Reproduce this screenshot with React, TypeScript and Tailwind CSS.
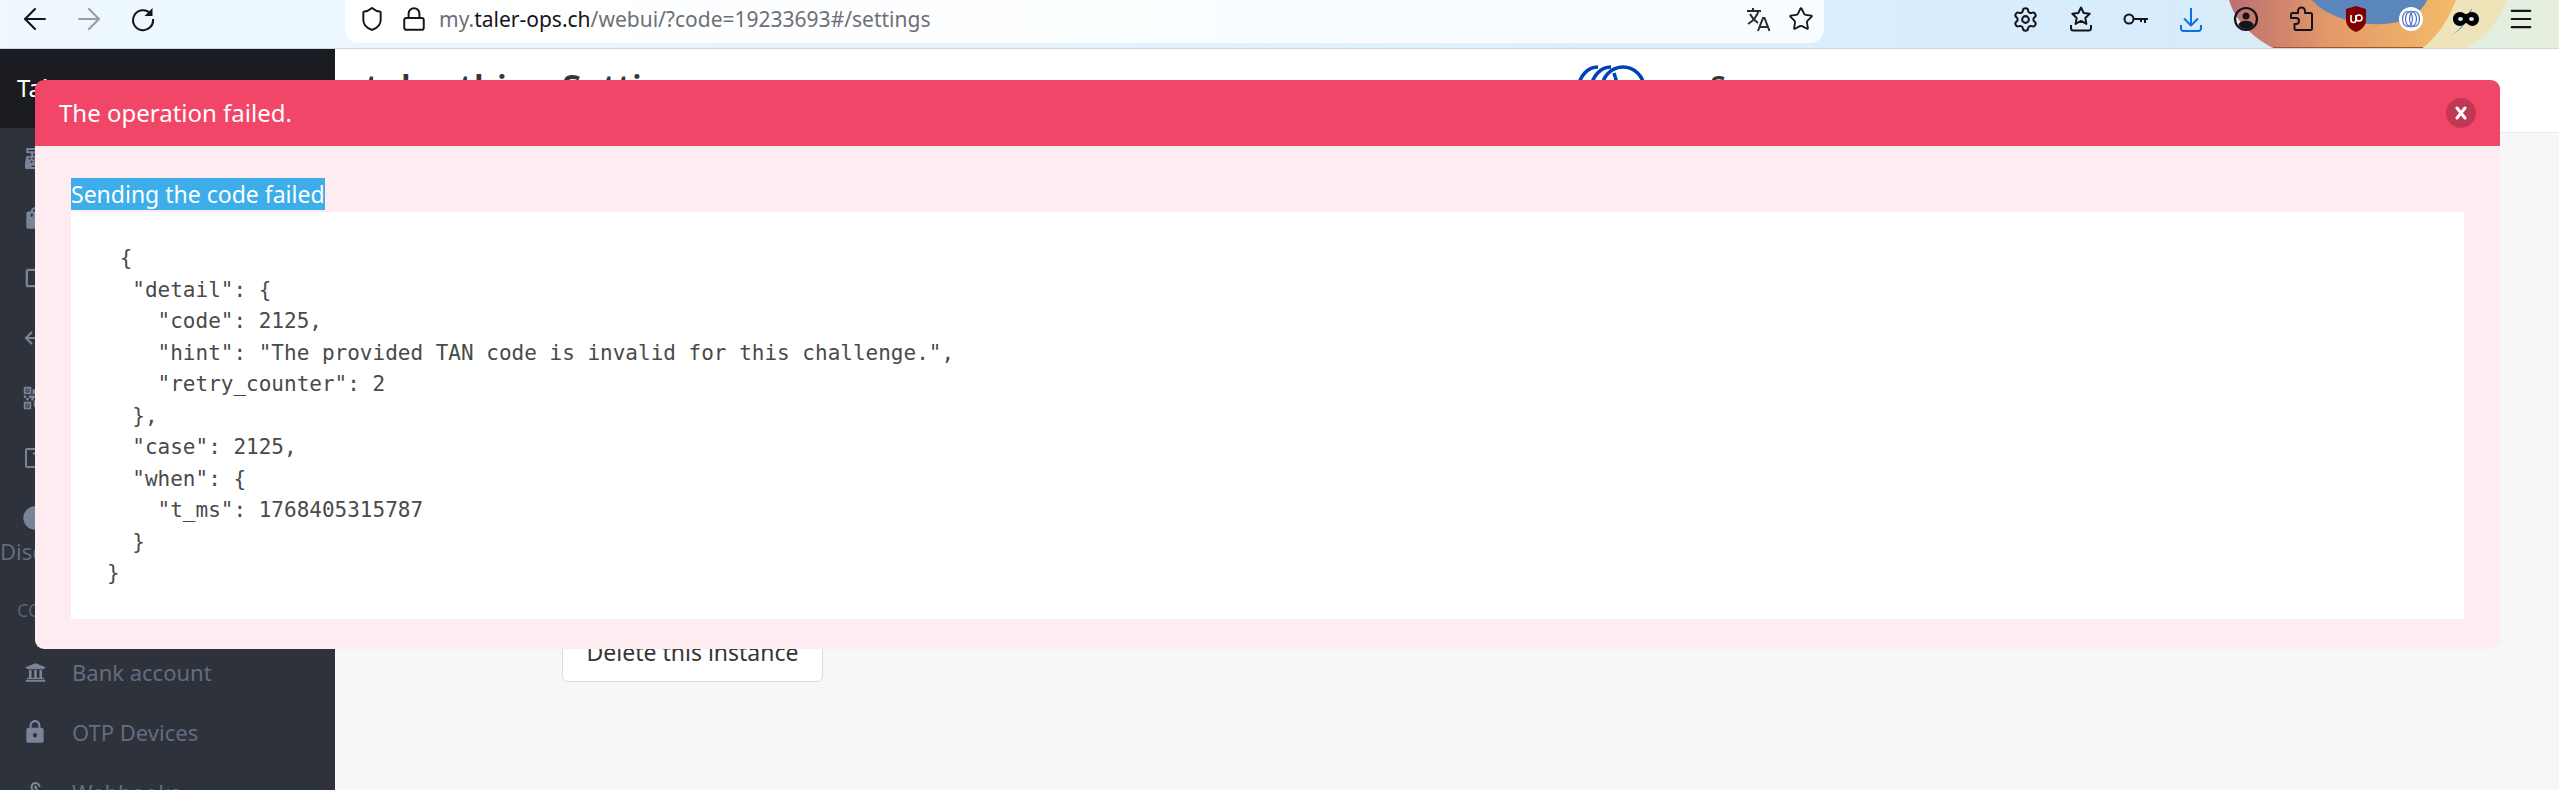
import { ArrowLeft, ArrowRight, Lock, Menu, Settings, Shield, Star } from "lucide-react";
import { FaCashRegister, FaUniversity } from "react-icons/fa";
import { MdCropSquare, MdLock, MdQrCode2, MdWebhook, MdCircle, MdShoppingBag } from "react-icons/md";

const json = ` {
  "detail": {
    "code": 2125,
    "hint": "The provided TAN code is invalid for this challenge.",
    "retry_counter": 2
  },
  "case": 2125,
  "when": {
    "t_ms": 1768405315787
  }
}`;

function Reload() {
  return (
    <svg width="26" height="26" viewBox="0 0 26 26" fill="none" stroke="#15141a" strokeWidth="2">
      <path d="M20.500 7.500A10 10 0 1 0 23 13" />
      <path d="M22.500 2v8h-8z" fill="#15141a" stroke="none" />
    </svg>
  );
}

function Translate() {
  return (
    <svg width="26" height="26" viewBox="0 0 26 26" fill="none" stroke="#2b2a33" strokeWidth="2">
      <path d="M1 5h14M7 2v3M12.500 5C11 10 7 15 2 18M4 8c2 4 5 7 8 9" />
      <path d="M12 25l5-13h1.500l5 13M14 21h8" />
    </svg>
  );
}

function StarTray() {
  return (
    <svg width="24" height="26" viewBox="0 0 24 26" fill="none" stroke="#15141a" strokeWidth="2" strokeLinejoin="round">
      <path d="M12 1.500l2.700 5.500 6 .8-4.400 4.100 1.100 6-5.400-3-5.400 3 1.100-6L3.300 7.800l6-.8z" />
      <path d="M2 19v3a2.500 2.500 0 0 0 2.500 2.500h15A2.500 2.500 0 0 0 22 22v-3" />
    </svg>
  );
}

function KeyIcon() {
  return (
    <svg width="26" height="14" viewBox="0 0 26 14" fill="none" stroke="#15141a" strokeWidth="2">
      <circle cx="6" cy="7" r="4.500" />
      <path d="M10.500 7H25M22 7v4M18 7v3" />
    </svg>
  );
}

function DownloadIcon() {
  return (
    <svg width="22" height="25" viewBox="0 0 22 25" fill="none" stroke="#0a70e8" strokeWidth="2" strokeLinejoin="round">
      <path d="M11 1v17M4 11.500l7 7 7-7" />
      <path d="M1 18v3.500A2.500 2.500 0 0 0 3.500 24h15a2.500 2.500 0 0 0 2.500-2.500V18" />
    </svg>
  );
}

function Account() {
  return (
    <svg width="26" height="26" viewBox="0 0 26 26" fill="none">
      <circle cx="13" cy="13" r="11" stroke="#15141a" strokeWidth="2.200" />
      <circle cx="13" cy="10" r="3.500" fill="#15141a" />
      <path d="M5.500 19a6 3.500 0 0 1 15 0c-2 2.500-4.500 4-7.500 4s-5.500-1.500-7.500-4z" fill="#15141a" />
    </svg>
  );
}

function PuzzleIcon() {
  return (
    <svg width="24" height="26" viewBox="0 0 24 26" fill="none" stroke="#15141a" strokeWidth="2" strokeLinejoin="round">
      <path d="M9 7V5a3.500 3.500 0 0 1 7 0v2h5.500a1.500 1.500 0 0 1 1.500 1.500v14a1.500 1.500 0 0 1-1.500 1.500H7a1.500 1.500 0 0 1-1.500-1.500V18H7a3 3 0 0 0 0-6H2V8.500A1.500 1.500 0 0 1 3.500 7z" />
    </svg>
  );
}

function UblockIcon() {
  return (
    <svg width="22" height="26" viewBox="0 0 22 26">
      <path d="M11 0l10 3v11c0 6-5 10-10 12C6 24 1 20 1 14V3z" fill="#800000" />
      <path d="M6 9v5a2.500 2.500 0 0 0 5 0V9" fill="none" stroke="#fff" strokeWidth="1.600" />
      <circle cx="14" cy="12" r="3" fill="none" stroke="#fff" strokeWidth="1.600" />
    </svg>
  );
}

function RingsBadge() {
  return (
    <svg width="24" height="24" viewBox="0 0 24 24" fill="none" stroke="#4f74c8" strokeWidth="1.200">
      <circle cx="12" cy="12" r="12" fill="#fff" stroke="none" />
      <ellipse cx="8.500" cy="12" rx="5" ry="7.500" />
      <ellipse cx="12" cy="12" rx="5.500" ry="8" />
      <ellipse cx="15.500" cy="12" rx="5" ry="7.500" />
    </svg>
  );
}

function MaskIcon() {
  return (
    <svg width="26" height="16" viewBox="0 0 26 16">
      <path d="M7 1c3 0 4.500 2 6 2s3-2 6-2c4 0 7 3 7 7s-3 7-7 7c-3 0-4.500-3-6-3s-3 3-6 3c-4 0-7-3-7-7s3-7 7-7z" fill="#000" />
      <ellipse cx="7.500" cy="8" rx="2.500" ry="2" fill="#d5e8ee" />
      <ellipse cx="18.500" cy="8" rx="2.500" ry="2" fill="#d5e8ee" />
    </svg>
  );
}

function NumberBox() {
  return (
    <svg width="20" height="20" viewBox="0 0 20 20" fill="none" stroke="currentColor" strokeWidth="2">
      <rect x="1" y="1" width="18" height="18" rx="1" />
      <path d="M8 6l3-1.500V15" />
    </svg>
  );
}

function BackArrow() {
  return (
    <svg width="22" height="14" viewBox="0 0 22 14" fill="none" stroke="currentColor" strokeWidth="2.200">
      <path d="M22 7H2M8 1L2 7l6 6" />
    </svg>
  );
}

// firefox theme artwork behind the toolbar icons
function ThemeArt() {
  return (
    <svg className="absolute left-[2200px] top-0" width="359" height="48" viewBox="0 0 359 48">
      <defs>
        <linearGradient id="fox" x1="0" x2="1" y1="0" y2="0">
          <stop offset="0" stopColor="#bd6f72" />
          <stop offset="0.45" stopColor="#e29a68" />
          <stop offset="1" stopColor="#f3bb68" />
        </linearGradient>
      </defs>
      <path d="M256 0h50c-4 14-14 34-40 48h-43z" fill="#f7dd9c" opacity="0.6" />
      <path d="M29 0C34 18 50 36 73 48H223C240 34 250 16 256 0Z" fill="url(#fox)" />
      <path d="M112 0C125 16 165 32 205 20C215 16 224 8 227 0Z" fill="#5b86bb" />
      <path d="M272 8C270 20 262 30 250 36C260 30 266 22 268 14Z" fill="#5b86bb" />
      <path d="M73 47h150v1H73z" fill="#a5522d" />
    </svg>
  );
}

function ToolbarSlot({ children }: { children: React.ReactNode }) {
  return <div className="flex h-[38px] w-[55px] items-center justify-center">{children}</div>;
}

function Toolbar() {
  return (
    <div className="relative flex h-[49px] w-full border-b border-[#c6d8e5] bg-gradient-to-r from-[#eff8ff] via-[#d6ecfc] via-85% to-[#e6efdc]">
      <ThemeArt />
      <div className="relative flex pl-[8px]">
        <div className="flex h-[38px] w-[54px] items-center justify-center">
          <ArrowLeft size={34} color="#15141a" strokeWidth={1.5} />
        </div>
        <div className="flex h-[38px] w-[54px] items-center justify-center">
          <ArrowRight size={34} color="#9a9ea4" strokeWidth={1.5} />
        </div>
        <div className="flex h-[38px] w-[54px] items-center justify-center">
          <Reload />
        </div>
      </div>
      <div className="relative ml-[175px] flex h-[43px] w-[1479px] items-center rounded-b-[14px] bg-gradient-to-r from-white to-[#f7fcff] pb-[5px] pl-[14px]">
        <Shield size={26} color="#15141a" strokeWidth={1.8} />
        <Lock size={26} color="#15141a" strokeWidth={1.8} className="ml-[16px]" />
        <div className="ml-[12px] text-[21px] leading-none text-[#6f6f75] [font-family:'Noto_Sans',sans-serif]">
          my.<span className="text-[#15141a]">taler-ops.ch</span>/webui/?code=19233693#/settings
        </div>
        <div className="ml-auto flex items-center gap-[16px] pr-[10px]">
          <Translate />
          <Star size={26} color="#15141a" strokeWidth={1.7} />
        </div>
      </div>
      <div className="relative ml-[174px] flex h-[38px] items-center">
        <ToolbarSlot><Settings size={27} color="#15141a" strokeWidth={1.8} /></ToolbarSlot>
        <ToolbarSlot><StarTray /></ToolbarSlot>
        <ToolbarSlot><KeyIcon /></ToolbarSlot>
        <ToolbarSlot><DownloadIcon /></ToolbarSlot>
        <ToolbarSlot><Account /></ToolbarSlot>
        <ToolbarSlot><PuzzleIcon /></ToolbarSlot>
        <ToolbarSlot><UblockIcon /></ToolbarSlot>
        <ToolbarSlot><RingsBadge /></ToolbarSlot>
        <ToolbarSlot><MaskIcon /></ToolbarSlot>
        <ToolbarSlot><Menu size={28} color="#15141a" strokeWidth={1.8} /></ToolbarSlot>
      </div>
    </div>
  );
}

function NavRow({ icon, label }: { icon: React.ReactNode; label?: string }) {
  return (
    <div className="flex h-[60px] items-center text-[#636d80]">
      <div className="flex w-[72px] shrink-0 justify-center pr-[2px] text-[#7a8499]">{icon}</div>
      {label && <span>{label}</span>}
    </div>
  );
}

function Sidebar() {
  return (
    <aside className="w-[335px] shrink-0 bg-[#2e323a] text-[22px] leading-[32px] [font-family:'Noto_Sans',sans-serif]">
      <div className="flex h-[79px] items-start bg-[#1a1c21] pl-[17px] pt-[23px] text-[24px] text-white">Taler</div>
      <NavRow icon={<FaCashRegister size={21} />} />
      <NavRow icon={<MdShoppingBag size={26} />} />
      <NavRow icon={<MdCropSquare size={28} />} />
      <NavRow icon={<BackArrow />} />
      <NavRow icon={<MdQrCode2 size={30} />} />
      <NavRow icon={<NumberBox />} />
      <NavRow icon={<MdCircle size={28} />} />
      <div className="-mt-[13px] text-[#636d80]">Discounts</div>
      <div className="h-[75px] pl-[17px] pt-[27px] text-[18px] uppercase text-[#596274]">Configuration</div>
      <NavRow icon={<FaUniversity size={21} />} label="Bank account" />
      <NavRow icon={<MdLock size={26} />} label="OTP Devices" />
      <NavRow icon={<MdWebhook size={24} />} label="Webhooks" />
    </aside>
  );
}

function Main() {
  return (
    <main className="min-w-0 flex-1 bg-[#f7f7f7] [font-family:'Noto_Sans',sans-serif]">
      <div className="flex h-[84px] items-center border-b border-[#ebebeb] bg-white pl-[30px] text-[#363636]">
        <div className="-mt-[6px] w-[1210px] shrink-0 text-[36px] font-semibold">taler-thing Settings</div>
        <svg width="72" height="50" viewBox="0 0 70 50" fill="none" stroke="#0042b3" strokeWidth="3.500" className="-mt-[1px]">
          <path d="M1.500 24C4 10 12 2 22 2" />
          <path d="M14 24C17 10 25 2 35 2" />
          <circle cx="47" cy="23" r="21" />
          <path d="M38 8l9 30" />
        </svg>
        <div className="-mt-[9px] ml-[63px] text-[29px] font-semibold">S</div>
      </div>
      <div className="pl-[227px] pt-[497px]">
        <button className="h-[52px] w-[261px] rounded-[6px] border border-[#dbdbdb] bg-white pb-[8px] text-[23px] text-[#363636]">
          Delete this instance
        </button>
      </div>
    </main>
  );
}

function ErrorModal() {
  return (
    <div className="absolute left-[35px] top-[80px] w-[2465px] overflow-hidden rounded-[9px] [font-family:'Noto_Sans',sans-serif]">
      <div className="flex h-[66px] items-center justify-between bg-[#f14668] pl-[24px] pr-[24px] text-[24px] text-white">
        <span>The operation failed.</span>
        <button className="flex h-[30px] w-[30px] items-center justify-center rounded-full bg-black/20">
          <svg width="14" height="14" viewBox="0 0 14 14" stroke="#fff" strokeWidth="3" strokeLinecap="round">
            <path d="M3 2l8 10M11 2L3 12" />
          </svg>
        </button>
      </div>
      <div className="bg-[#feecf0] px-[36px] pb-[30px] pt-[32px]">
        <div className="mb-[2px] flex h-[32px]">
          <span className="bg-[#3daee9] text-[23px] leading-[32px] text-white">Sending the code failed</span>
        </div>
        <pre className="h-[407px] bg-white px-[36px] pt-[31px] text-[21px] leading-[31.5px] text-[#4a4a4a] [font-family:'DejaVu_Sans_Mono',monospace]">
          {json}
        </pre>
      </div>
    </div>
  );
}

export default function App() {
  return (
    <div className="relative h-[790px] w-[2559px] overflow-hidden">
      <Toolbar />
      <div className="flex h-[741px]">
        <Sidebar />
        <Main />
      </div>
      <ErrorModal />
    </div>
  );
}
